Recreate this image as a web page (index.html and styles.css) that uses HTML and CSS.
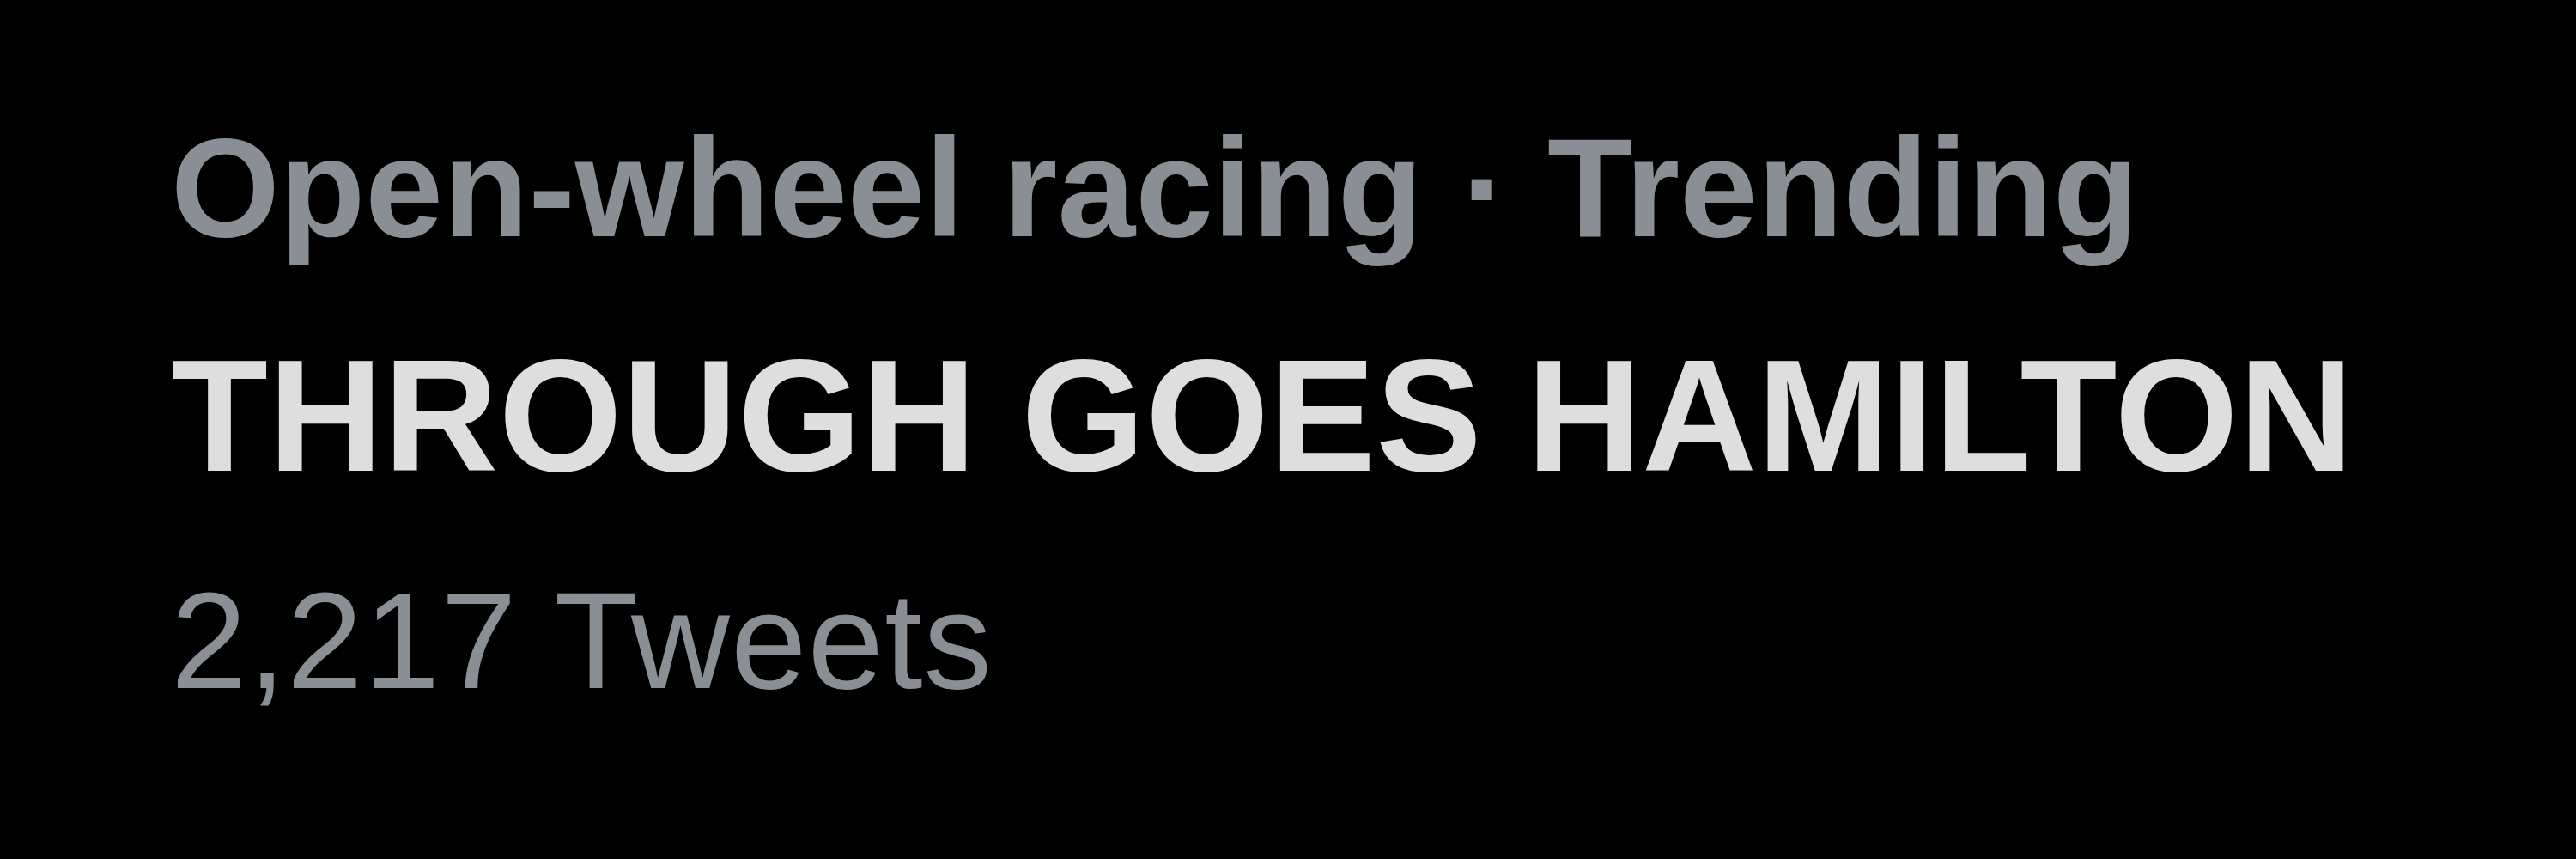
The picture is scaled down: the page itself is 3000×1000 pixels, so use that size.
FILE: index.html
```html
<!DOCTYPE html>
<html lang="en">
<head>
    <meta charset="UTF-8">
    <meta name="viewport" content="width=device-width, initial-scale=1.0">
    <title>Trending - THROUGH GOES HAMILTON</title>
    <link rel="stylesheet" href="styles.css">
</head>
<body>
    <div class="trend-item">
        <div class="trend-context">Open-wheel racing · Trending</div>
        <div class="trend-title">THROUGH GOES HAMILTON</div>
        <div class="trend-count">2,217 Tweets</div>
    </div>
</body>
</html>
```

FILE: styles.css
```css
body, html {
    margin: 0;
    padding: 0;
    background: #000;
    font-family: "Liberation Sans", Arial, sans-serif;
    height: 100%;
}

.trend-item {
    display: flex;
    flex-direction: column;
    padding: 137px 0 0 199px;
}

.trend-context {
    font-size: 163px;
    line-height: 1;
    font-weight: bold;
    color: #8a8f96;
}

.trend-title {
    margin-top: 92px;
    font-size: 185px;
    line-height: 1;
    font-weight: bold;
    letter-spacing: 0.5px;
    color: #dedede;
}

.trend-count {
    margin-top: 90px;
    font-size: 159px;
    line-height: 1;
    letter-spacing: 1.2px;
    color: #8a8f96;
}
```
